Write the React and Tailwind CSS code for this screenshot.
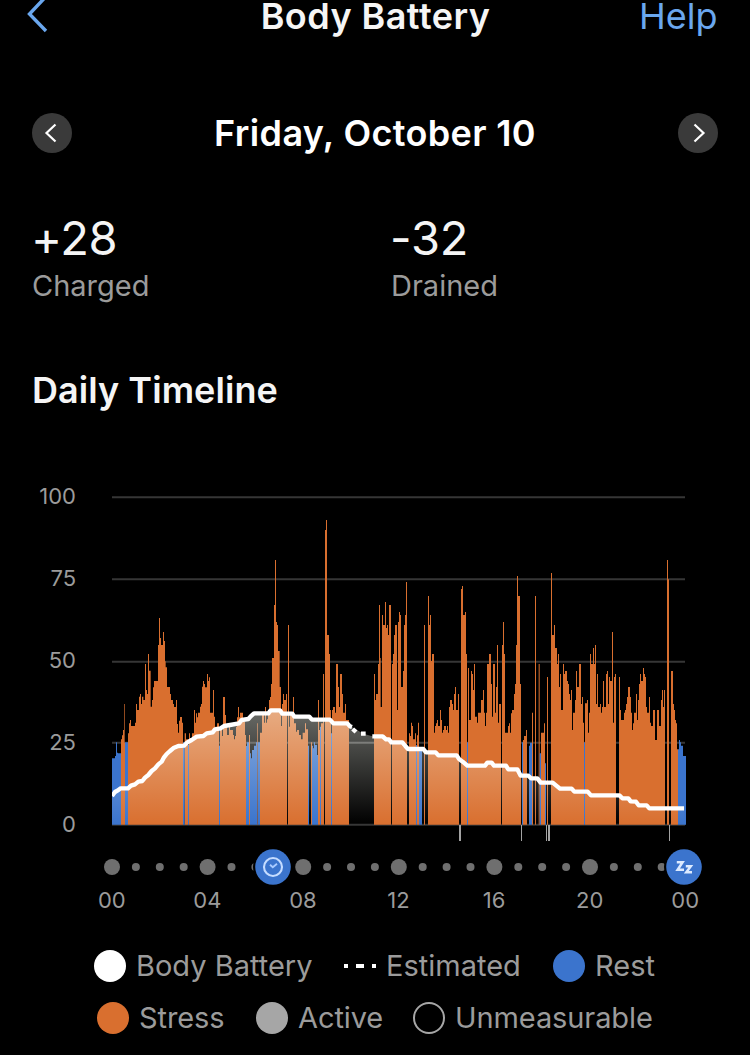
// Chart units: 3 per pixel. 0 on the scale sits at BASE, 100 at 51.
const BASE = 1034;

// Each run is a step list of "x top kind"; a bar reaches to the next entry.
// kinds: s = stress, r = rest, n = nothing recorded
const RUNS = [
  {
    offset: -36,
    steps:
      "36 835 r,45 828 r,48 787 r,51 818 r,54 820 r,63 778 s,66 766 s,69 750 s,72 672 s,74 788 s,75 787 r,84 760 s,87 730 s,90 720 s,93 738 s,105 728 s,108 672 s,111 690 s,117 650 s,120 642 s,123 672 s,126 650 s,130 660 s,135 552 s,138 630 s,141 642 s,144 522 s,147 572 s,152 680 s,156 660 s,159 622 s,162 603 s,174 495 s,177 414 s,180 474 s,183 495 s,189 456 s,192 483 s,195 544 s,197 562 s,201 621 s,210 642 s,213 660 s,219 672 s,222 681 s,228 660 s,231 732 s,234 758 s,237 722 s,240 711 s,246 728 s,249 787 r,254 760 s,258 778 s,264 795 r,267 760 s,270 775 s,276 760 s,282 690 s,285 728 s,288 700 s,291 712 s,294 698 s,300 680 s,303 672 s,306 620 s,309 603 s,312 612 s,315 622 s,321 582 s,324 603 s,327 592 s,330 698 s,339 630 s,342 710 s,345 740 s,351 730 s,357 797 r,360 745 s,366 768 s,369 651 s,375 705 s,378 740 s,381 765 s,387 730 s,390 750 s,399 765 s,402 778 s,405 768 s,408 740 s,411 712 s,414 681 s,417 712 s,420 698 s,429 725 s,435 765 s,438 798 r",
  },
  {
    offset: 354,
    steps:
      "48 798 r,51 787 r,57 765 s,60 820 r,63 835 r,66 810 r,72 797 r,78 787 r,81 730 s,83 787 r,90 758 s,96 700 s,102 728 s,105 681 s,108 728 s,111 718 s,114 700 s,117 660 s,120 651 s,123 612 s,126 534 s,132 375 s,135 240 s,138 426 s,141 435 s,144 513 s,149 621 s,153 738 s,156 672 s,159 642 s,162 660 s,168 642 s,171 1034 n,174 435 s,177 740 s,180 700 s,189 651 s,192 730 s,198 755 s,201 750 s,207 765 s,213 778 s,218 758 s,225 730 s,228 748 s,234 797 r,237 1034 n,243 787 s,246 797 r,249 805 r,252 787 r,255 795 r,261 825 r,264 660 s,267 750 s,270 740 r,273 730 s,279 582 s,282 1034 n,285 150 s,288 120 s,291 465 s,297 522 s,300 690 s,303 760 r,306 690 s,309 681 s,315 698 s,318 552 s,324 621 s,327 681 s,330 582 s,336 642 s,339 698 s,345 672 s,348 720 s,357 1034 n",
  },
  {
    offset: 684,
    steps:
      "102 582 s,105 660 s,108 642 s,114 552 s,117 375 s,120 534 s,122 681 s,126 405 s,129 435 s,135 366 s,138 444 s,141 435 s,144 465 s,147 375 s,153 1034 n,156 552 s,159 522 s,162 465 s,165 435 s,171 690 s,174 426 s,177 396 s,180 405 s,183 621 s,189 573 s,192 435 s,195 405 s,198 306 s,201 1034 n,207 760 s,210 768 s,213 728 s,216 738 s,219 778 s,225 760 s,228 795 r,231 766 s,234 728 s,237 805 r,246 1034 n,252 435 s,255 1034 n,264 348 s,267 435 s,270 405 s,273 543 s,276 522 s,282 758 s,285 738 s,288 730 s,291 720 s,294 738 s,300 690 s,303 720 s,306 758 s,309 750 s,312 738 s,318 750 s,321 738 s,324 758 s,327 681 s,330 660 s,336 672 s,339 690 s,342 642 s,345 621 s,348 690 s,354 642 s,357 1034 n",
  },
  {
    offset: 1014,
    steps:
      "33 327 s,36 318 s,39 405 s,45 396 s,48 522 s,51 787 r,54 564 s,57 720 s,63 573 s,66 582 s,69 630 s,72 552 s,75 710 s,81 728 s,84 698 s,93 660 s,99 630 s,102 698 s,105 738 s,108 698 s,111 552 s,117 522 s,123 612 s,126 710 s,129 552 s,135 698 s,138 621 s,141 495 s,144 728 s,147 672 s,153 1034 n,156 495 s,159 426 s,162 522 s,165 758 s,174 738 s,177 730 s,180 758 s,183 700 s,186 690 s,192 642 s,195 612 s,198 495 s,201 288 s,204 348 s,210 612 s,213 1034 n,216 787 r,219 780 s,222 768 s,228 750 s,231 1034 n,237 797 r,240 788 r,246 698 s,249 1034 n,255 348 s,258 1034 n,266 552 s,269 820 r,273 758 s,282 730 s,285 850 r,288 1034 n,291 591 s,294 1034 n,303 279 s,306 465 s,312 435 s,315 504 s,321 552 s,324 522 s,327 621 s,330 582 s,333 690 s,339 552 s,342 582 s,345 573 s,351 603 s,354 612 s,357 642 s,360 660 s,363 630 s,366 750 s,369 698 s,375 660 s,378 573 s,381 621 s,387 552 s",
  },
  {
    offset: 1344,
    steps:
      "57 552 s,63 672 s,66 651 s,69 728 s,72 787 r,75 670 s,81 660 s,84 758 s,87 698 s,90 522 s,93 552 s,99 504 s,102 552 s,105 495 s,108 672 s,111 582 s,114 681 s,120 672 s,123 698 s,126 681 s,129 603 s,132 681 s,138 582 s,141 573 s,144 672 s,147 591 s,150 603 s,156 456 s,159 728 s,162 591 s,165 582 s,168 1034 n,177 591 s,180 690 s,183 720 s,192 698 s,195 690 s,198 672 s,201 651 s,204 621 s,210 651 s,213 698 s,216 750 s,219 730 s,222 698 s,228 642 s,231 720 s,234 660 s,237 612 s,240 582 s,243 603 s,249 564 s,252 582 s,255 591 s,258 681 s,261 698 s,267 651 s,270 728 s,273 738 s,279 690 s,285 780 s,291 690 s,297 738 s,303 660 s,306 630 s,309 681 s,312 630 s,315 1034 n,321 240 s,324 298 s,327 1034 n,333 573 s,339 672 s,342 690 s,345 720 s,348 730 s,351 808 s,354 808 r,357 780 r,360 787 r,363 797 r,369 828 r,378 1034 n",
  },
];

const MORNING =
  "0,948 9,936 16,932 26,925 48,925 57,917 69,913 79,905 91,903 99,893 109,885 119,873 129,865 139,853 149,845 156,832 164,822 174,813 186,803 199,798 216,797 226,787 239,780 254,770 274,768 284,760 302,757 309,748 326,745 336,738 354,735 381,730 389,720 409,717 416,709 426,700 469,700 476,691 504,691 511,701 541,701 547,710 592,710 600,719 654,719 664,730 706,730 714,739 720,741";
const EVENING =
  "781,769 812,769 822,778 831,778 838,787 871,787 880,798 888,807 934,807 942,817 971,817 979,826 1034,826 1042,838 1052,845 1066,857 1119,857 1126,848 1139,848 1146,857 1182,857 1189,868 1216,868 1226,887 1249,887 1257,895 1276,895 1286,908 1322,908 1332,916 1344,926 1379,926 1387,935 1427,935 1437,946 1522,946 1531,955 1549,955 1556,964 1572,965 1580,976 1604,976 1612,985 1716,985";

const ACTIVE_TICKS = [
  [1041, 6],
  [1227, 3],
  [1302, 3],
  [1308, 6],
  [1671, 3],
];

const samples = RUNS.flatMap(({ offset, steps }) =>
  steps.split(",").map((step) => {
    const [x, top, kind] = step.split(" ");
    return { x: Number(x) + offset, top: Number(top), kind };
  })
);

function areaPath(kind) {
  return samples
    .map((s, i) => {
      const next = samples[i + 1];
      if (s.kind !== kind || !next) return "";
      return `M${s.x} ${BASE}V${s.top}H${next.x}V${BASE}Z`;
    })
    .join("");
}

function Chart() {
  return (
    <svg
      className="mt-[25px] h-[364px] w-[575px] shrink-0"
      viewBox="0 0 1725 1092"
      fill="none"
    >
      <defs>
        <linearGradient
          id="battery"
          gradientUnits="userSpaceOnUse"
          x1="0"
          y1="691"
          x2="0"
          y2={BASE}
        >
          <stop offset="0" stopColor="#fbfff4" stopOpacity="0.42" />
          <stop offset="1" stopColor="#fbfff4" stopOpacity="0" />
        </linearGradient>
      </defs>

      {[52, 298, 545, 788, BASE].map((y) => (
        <path key={y} d={`M0 ${y}H1719`} stroke="#363636" strokeWidth="6" />
      ))}

      <path d={areaPath("s")} fill="#d96f2f" />
      <path d={areaPath("r")} fill="#3b74cd" />
      {ACTIVE_TICKS.map(([x, width]) => (
        <rect key={x} x={x} y="1035" width={width} height="48" fill="#a3a3a3" />
      ))}

      <polygon
        points={`0,${BASE} ${MORNING} 754,761 ${EVENING} 1719,${BASE}`}
        fill="url(#battery)"
      />
      <path
        d="M711 788H786"
        stroke="#fff"
        strokeOpacity="0.08"
        strokeWidth="6"
      />
      <g stroke="#fff" strokeWidth="13" strokeLinejoin="round">
        <polyline points={MORNING} />
        <path d="M722 747L732 756M747 761H761" />
        <polyline points={EVENING} />
      </g>
    </svg>
  );
}

function HourDots() {
  return (
    <svg className="ml-[92px] h-[46px] w-[612px]" viewBox="0 0 612 46" fill="none">
      {Array.from({ length: 24 }, (_, hour) => (
        <circle
          key={hour}
          cx={20 + hour * 23.9}
          cy="23"
          r={hour % 4 === 0 ? 8 : 4}
          fill="#6f6f6f"
        />
      ))}

      <circle cx="181" cy="23" r="20" fill="#000" />
      <circle cx="181" cy="23" r="17.8" fill="#3b74cd" />
      <circle cx="181" cy="23" r="9" stroke="#c5dcff" strokeWidth="2.1" />
      <path
        d="M178 20.8L180.8 23.2L185 19.8"
        stroke="#a9caff"
        strokeWidth="1.9"
      />

      <circle cx="592" cy="23" r="20" fill="#000" />
      <circle cx="592" cy="23" r="17.8" fill="#3b74cd" />
      <path
        d="M584.8 18.2H590.6L585.6 25.8H592M593.8 22.2H598.8L594.3 28.3H600"
        stroke="#dceaff"
        strokeWidth="2.5"
      />
    </svg>
  );
}

function LegendItem({ swatch, label, width }) {
  return (
    <div className="flex items-center gap-2.5">
      {swatch}
      <span className={"whitespace-nowrap pt-px " + width}>{label}</span>
    </div>
  );
}

function Swatch({ color }) {
  return <span className={"size-8 rounded-full " + color} />;
}

function DashSwatch() {
  return (
    <span className="flex w-8 items-center justify-between">
      <span className="h-1 w-1 bg-white" />
      <span className="h-1 w-2 bg-white" />
      <span className="h-1 w-1 bg-white" />
    </span>
  );
}

export default function App() {
  return (
    <div className="h-[1055px] w-[750px] overflow-hidden bg-black font-['Inter',sans-serif] text-[#f5f5f5]">
      <header className="flex h-8 items-center justify-between pl-[25px] pr-[33px]">
        <svg className="h-[44px] w-[91px]" viewBox="0 0 91 44" fill="none">
          <path d="M21 2.5L4.5 20L21 37" stroke="#6aa7ee" strokeWidth="3.4" />
        </svg>
        <h1 className="whitespace-nowrap pr-1 text-[36px] font-semibold leading-8 tracking-[0.45px]">
          Body Battery
        </h1>
        <button className="w-[78px] text-left text-[36px] leading-8 text-[#6aa7ee]">
          Help
        </button>
      </header>

      <div className="mt-[81px] flex h-10 items-center justify-between px-8">
        <button className="flex size-10 items-center justify-center rounded-full bg-[#3a3a3a]">
          <svg width="40" height="40" viewBox="0 0 40 40" fill="none">
            <path d="M23.5 11.5L14.5 20L23.5 28.5" stroke="#fff" strokeWidth="2.2" />
          </svg>
        </button>
        <h2 className="whitespace-nowrap text-[36px] font-semibold leading-10 tracking-[0.35px] text-white">
          Friday, October 10
        </h2>
        <button className="flex size-10 items-center justify-center rounded-full bg-[#3a3a3a]">
          <svg width="40" height="40" viewBox="0 0 40 40" fill="none">
            <path d="M16.5 11.5L25.5 20L16.5 28.5" stroke="#fff" strokeWidth="2.2" />
          </svg>
        </button>
      </div>

      <div className="mt-[61px] grid grid-cols-[359px_1fr] pl-8">
        <div>
          <p className="-ml-px text-[47px] leading-[48px] tracking-[-0.3px]">+28</p>
          <p className="mt-1.5 text-[29px] leading-9 text-[#9b9b9b]">Charged</p>
        </div>
        <div>
          <p className="-ml-px text-[47px] leading-[48px] tracking-[-0.2px]">-32</p>
          <p className="mt-1.5 text-[29px] leading-9 text-[#9b9b9b]">Drained</p>
        </div>
      </div>

      <h3 className="mt-[66px] pl-8 text-[36px] font-semibold leading-10 tracking-[0.05px]">
        Daily Timeline
      </h3>

      <div className="mt-[45px] flex h-[389px]">
        <div className="mr-[36px] w-[76px] text-right text-[22px] leading-[82px] text-[#9b9b9b]">
          {[100, 75, 50, 25, 0].map((tick) => (
            <p key={tick}>{tick}</p>
          ))}
        </div>
        <Chart />
      </div>

      <HourDots />
      <div className="ml-[64px] grid w-[669px] grid-cols-7 text-center text-[22px] leading-5 text-[#9b9b9b]">
        {["00", "04", "08", "12", "16", "20", "00"].map((hour, i) => (
          <p key={i}>{hour}</p>
        ))}
      </div>

      <div className="mt-[39px] flex flex-col items-center gap-[19px] text-[29px] leading-8 text-[#9b9b9b]">
        <div className="flex gap-[31px]">
          <LegendItem swatch={<Swatch color="bg-white" />} label="Body Battery" width="w-[177px]" />
          <LegendItem swatch={<DashSwatch />} label="Estimated" width="w-[136px]" />
          <LegendItem swatch={<Swatch color="bg-[#3b74cd]" />} label="Rest" width="w-[61px]" />
        </div>
        <div className="flex gap-[31px] tracking-[-0.1px]">
          <LegendItem swatch={<Swatch color="bg-[#d96f2f]" />} label="Stress" width="w-[86px]" />
          <LegendItem swatch={<Swatch color="bg-[#a6a6a6]" />} label="Active" width="w-[84px]" />
          <LegendItem
            swatch={<Swatch color="border-2 border-[#a6a6a6]" />}
            label="Unmeasurable"
            width="w-[198px]"
          />
        </div>
      </div>
    </div>
  );
}
